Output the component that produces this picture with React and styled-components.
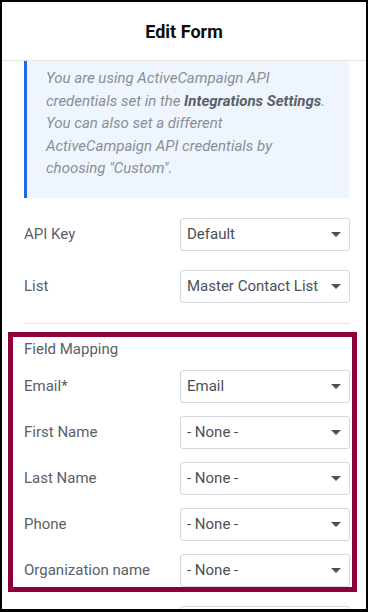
import React from 'react';
import styled, { createGlobalStyle } from 'styled-components';

const GlobalStyle = createGlobalStyle`
  html, body {
    margin: 0;
    padding: 0;
    background: #ffffff;
  }
  * {
    box-sizing: border-box;
  }
`;

const Frame = styled.div`
  width: 368px;
  height: 612px;
  border: 2px solid #000;
  border-bottom-width: 3px;
  background: #fff;
  overflow: hidden;
  font-family: Roboto, 'Liberation Sans', Arial, sans-serif;
`;

const Header = styled.header`
  height: 59px;
  border-bottom: 1px solid #e3e4e6;
  display: flex;
  align-items: center;
  justify-content: center;
  font-size: 18px;
  font-weight: 700;
  color: #0c0d0e;
`;

const Body = styled.div`
  padding: 0 16px 0 22px;
`;

const Notice = styled.div`
  margin-right: 1px;
  background: #eef5fe;
  border-left: 3px solid #2566e8;
  border-radius: 0 4px 4px 0;
  padding: 6px 18px 18px 19px;
  font-size: 15px;
  font-style: italic;
  line-height: 22.5px;
  color: #8a8f95;

  strong {
    font-weight: 700;
    color: #5b6066;
  }
`;

const Group = styled.div`
  display: flex;
  flex-direction: column;
  gap: ${({ $gap }) => $gap}px;
  margin-top: ${({ $top }) => $top || 0}px;
`;

const Row = styled.div`
  display: grid;
  grid-template-columns: 1fr 170px;
  align-items: center;
`;

const Label = styled.span`
  font-size: 15px;
  color: #5a6068;
`;

const SelectBox = styled.div`
  position: relative;
  height: 33px;
  border: 1px solid #d5d8dc;
  border-radius: 3px;
  padding-left: 6px;
  display: flex;
  align-items: center;
  font-size: 15px;
  color: #495157;
  white-space: nowrap;

  &::after {
    content: '';
    position: absolute;
    right: 8px;
    top: 50%;
    margin-top: -2px;
    border-left: 5px solid transparent;
    border-right: 5px solid transparent;
    border-top: 5px solid #4b5258;
  }
`;

const Divider = styled.hr`
  margin: 20px 0 0;
  border: 0;
  border-top: 1px solid #e3e4e6;
`;

const Highlight = styled.section`
  margin: 8px -7px 0 -16px;
  border: 5px solid #8e003b;
  padding: 2px 2px 0 11px;
`;

const SectionTitle = styled.div`
  font-size: 15px;
  line-height: 20px;
  color: #5a6068;
  margin-bottom: 11px;
`;

const Field = ({ label, value }) => (
  <Row>
    <Label>{label}</Label>
    <SelectBox>{value}</SelectBox>
  </Row>
);

const mapping = [
  ['Email*', 'Email'],
  ['First Name', '- None -'],
  ['Last Name', '- None -'],
  ['Phone', '- None -'],
  ['Organization name', '- None -'],
];

export default function App() {
  return (
    <Frame>
      <GlobalStyle />
      <Header>Edit Form</Header>
      <Body>
        <Notice>
          You are using ActiveCampaign API credentials set in the{' '}
          <strong>Integrations Settings</strong>. You can also set a different
          ActiveCampaign API credentials by choosing "Custom".
        </Notice>

        <Group $gap={19} $top={20}>
          <Field label="API Key" value="Default" />
          <Field label="List" value="Master Contact List" />
        </Group>

        <Divider />

        <Highlight>
          <SectionTitle>Field Mapping</SectionTitle>
          <Group $gap={13}>
            {mapping.map(([label, value]) => (
              <Field key={label} label={label} value={value} />
            ))}
          </Group>
        </Highlight>

        <Group $gap={13} $top={14}>
          <Field label="" value="" />
        </Group>
      </Body>
    </Frame>
  );
}
